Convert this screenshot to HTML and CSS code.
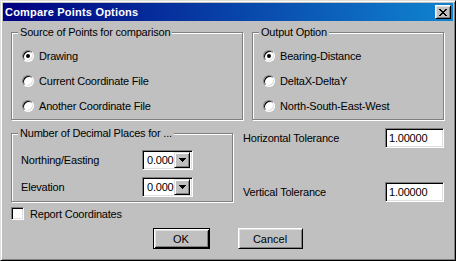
FILE: index.html
```html
<!DOCTYPE html>
<html lang="en">
<head>
  <meta charset="UTF-8">
  <title>Compare Points Options</title>
  <link rel="stylesheet" href="styles.css">
</head>
<body>
  <div class="window">
    <div class="titlebar">
      <span class="title">Compare Points Options</span>
      <button class="close-btn">
        <svg width="8" height="7" viewBox="0 0 8 7" shape-rendering="crispEdges">
          <path d="M0 0h2v1H0zM6 0h2v1H6zM1 1h2v1H1zM5 1h2v1H5zM2 2h4v1H2zM3 3h2v1H3zM2 4h4v1H2zM1 5h2v1H1zM5 5h2v1H5zM0 6h2v1H0zM6 6h2v1H6z" fill="#000"/>
        </svg>
      </button>
    </div>

    <div class="dialog-body">
      <!-- Top row: the two radio groups -->
      <div class="top-row">
        <div class="group">
          <span class="legend">Source of Points for comparison</span>
          <div class="radio-list">
            <label class="radio-row"><span class="radio checked"></span>Drawing</label>
            <label class="radio-row"><span class="radio"></span>Current Coordinate File</label>
            <label class="radio-row"><span class="radio"></span>Another Coordinate File</label>
          </div>
        </div>
        <div class="group">
          <span class="legend">Output Option</span>
          <div class="radio-list">
            <label class="radio-row"><span class="radio checked"></span>Bearing-Distance</label>
            <label class="radio-row"><span class="radio"></span>DeltaX-DeltaY</label>
            <label class="radio-row"><span class="radio"></span>North-South-East-West</label>
          </div>
        </div>
      </div>

      <!-- Middle row: decimals + tolerances -->
      <div class="mid-row">
        <div class="group decimals">
          <span class="legend">Number of Decimal Places for ...</span>
          <div class="field-row">
            <span>Northing/Easting</span>
            <div class="combo">
              <span class="combo-value">0.000</span>
              <span class="combo-btn">
                <svg width="7" height="4" viewBox="0 0 7 4" shape-rendering="crispEdges"><path d="M0 0h7v1H0zM1 1h5v1H1zM2 2h3v1H2zM3 3h1v1H3z" fill="#000"/></svg>
              </span>
            </div>
          </div>
          <div class="field-row">
            <span>Elevation</span>
            <div class="combo">
              <span class="combo-value">0.000</span>
              <span class="combo-btn">
                <svg width="7" height="4" viewBox="0 0 7 4" shape-rendering="crispEdges"><path d="M0 0h7v1H0zM1 1h5v1H1zM2 2h3v1H2zM3 3h1v1H3z" fill="#000"/></svg>
              </span>
            </div>
          </div>
        </div>

        <div class="tolerances">
          <div class="tol-row">
            <span>Horizontal Tolerance</span>
            <div class="textbox">1.00000</div>
          </div>
          <div class="tol-row">
            <span>Vertical Tolerance</span>
            <div class="textbox">1.00000</div>
          </div>
        </div>
      </div>

      <label class="check-row"><span class="checkbox"></span>Report Coordinates</label>

      <div class="buttons">
        <button class="btn btn-ok">OK</button>
        <button class="btn btn-cancel">Cancel</button>
      </div>
    </div>
  </div>
</body>
</html>
```

FILE: styles.css
```css
/* Page */
body {
  margin: 0;
  background: #c0c0c0;
  font-family: "Liberation Sans", Arial, sans-serif;
  font-size: 11px;
  letter-spacing: -0.2px;
  color: #000;
}

/* Window frame */
.window {
  width: 456px;
  height: 261px;
  box-sizing: border-box;
  padding: 2px;
  background: #c0c0c0;
  border: 1px solid;
  border-color: #dfdfdf #000 #000 #dfdfdf;
  box-shadow: inset 1px 1px #fff, inset -1px -1px #808080;
}

/* Title bar */
.titlebar {
  height: 18px;
  display: flex;
  align-items: center;
  justify-content: space-between;
  padding: 0 2px 0 2px;
  background: linear-gradient(to right, #000080, #1084d0);
  color: #fff;
  font-weight: bold;
  letter-spacing: 0.2px;
}

.close-btn {
  width: 16px;
  height: 14px;
  padding: 0;
  display: flex;
  align-items: center;
  justify-content: center;
  background: #c0c0c0;
  border: 1px solid;
  border-color: #fff #000 #000 #fff;
  box-shadow: inset 1px 1px #dfdfdf, inset -1px -1px #808080;
}

/* Dialog content */
.dialog-body {
  padding: 0 9px 0 8px;
}

.top-row {
  display: grid;
  grid-template-columns: 232px 192px;
  column-gap: 9px;
  margin-top: 11px;
}

/* Etched group box */
.group {
  border: 1px solid #808080;
  box-shadow: inset 1px 1px #fff, 1px 1px #fff;
  padding: 0 9px 7px;
}

.legend {
  display: block;
  width: fit-content;
  margin: -7px 0 0 -3px;
  padding: 0 2px;
  line-height: 13px;
  background: #c0c0c0;
}

/* Radio buttons */
.radio-list {
  display: flex;
  flex-direction: column;
  gap: 12px;
  margin-top: 10px;
}

.radio-row {
  display: flex;
  align-items: center;
  gap: 5px;
  height: 13px;
  padding-left: 1px;
}

.radio {
  width: 12px;
  height: 12px;
  box-sizing: border-box;
  display: flex;
  border-radius: 50%;
  background: #fff;
  border: 1px solid;
  border-color: #808080 #fff #fff #808080;
  box-shadow: inset 1px 1px #000, inset -1px -1px #dfdfdf;
}

.radio.checked::after {
  content: "";
  width: 4px;
  height: 4px;
  margin: auto;
  border-radius: 50%;
  background: #000;
}

/* Decimal places */
.mid-row {
  display: grid;
  grid-template-columns: 222px 1fr;
  column-gap: 10px;
  margin-top: 6px;
}

.decimals {
  margin-top: 7px;
  padding-bottom: 2px;
}

.field-row {
  display: grid;
  grid-template-columns: 121px 51px;
  align-items: center;
  height: 20px;
  margin-top: 7px;
}

.decimals .legend + .field-row {
  margin-top: 10px;
}

.combo,
.textbox,
.checkbox {
  box-sizing: border-box;
  background: #fff;
  border: 1px solid;
  border-color: #808080 #fff #fff #808080;
  box-shadow: inset 1px 1px #000, inset -1px -1px #dfdfdf;
}

.combo {
  height: 20px;
  display: flex;
  align-items: center;
  justify-content: space-between;
  padding: 2px;
}

.combo-value {
  padding-left: 2px;
}

.combo-btn {
  width: 16px;
  height: 16px;
  box-sizing: border-box;
  display: flex;
  align-items: center;
  justify-content: center;
  background: #c0c0c0;
  border: 1px solid;
  border-color: #dfdfdf #000 #000 #dfdfdf;
  box-shadow: inset 1px 1px #fff, inset -1px -1px #808080;
}

/* Tolerances */
.tolerances {
  display: flex;
  flex-direction: column;
  gap: 34px;
  padding-top: 2px;
}

.tol-row {
  display: flex;
  align-items: center;
  justify-content: space-between;
  height: 20px;
}

.textbox {
  width: 59px;
  height: 20px;
  padding: 0 3px;
  line-height: 18px;
}

/* Checkbox */
.check-row {
  display: flex;
  align-items: center;
  gap: 6px;
  height: 13px;
  margin-top: 5px;
}

.checkbox {
  width: 13px;
  height: 13px;
}

/* Buttons */
.buttons {
  display: flex;
  justify-content: center;
  gap: 28px;
  margin-top: 8px;
}

.btn {
  height: 21px;
  padding: 0;
  font: inherit;
  color: #000;
  background: #c0c0c0;
  border: 1px solid;
  border-color: #fff #000 #000 #fff;
  box-shadow: inset 1px 1px #dfdfdf, inset -1px -1px #808080;
}

.btn-ok {
  width: 57px;
  border-color: #000;
  box-shadow: inset 1px 1px #fff, inset -1px -1px #000, inset 2px 2px #dfdfdf, inset -2px -2px #808080;
}

.btn-cancel {
  width: 65px;
}
```
